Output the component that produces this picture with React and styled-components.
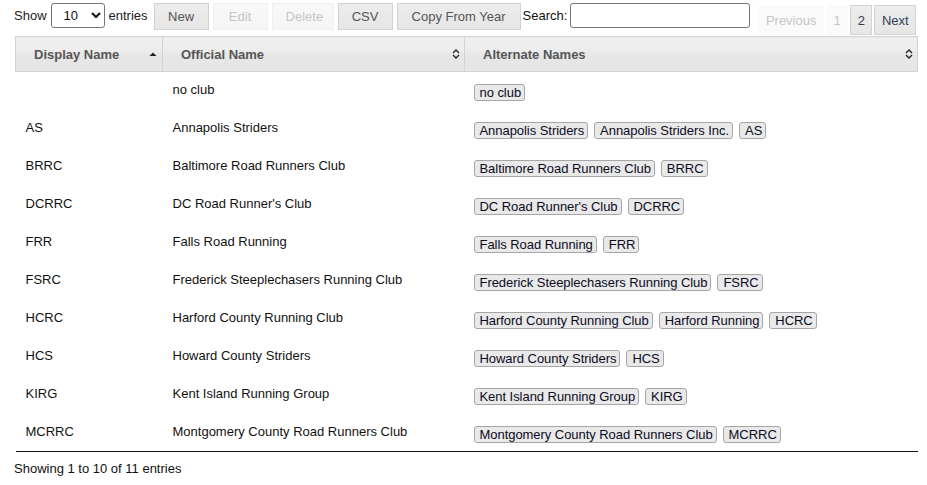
import React from "react";
import styled, { createGlobalStyle } from "styled-components";

const GlobalStyle = createGlobalStyle`
  body {
    margin: 0;
    background: #fff;
    font-family: "Liberation Sans", Arial, sans-serif;
    font-size: 13px;
    color: #222;
  }
`;

const clubs = [
  { display: "", official: "no club", alt: ["no club"] },
  { display: "AS", official: "Annapolis Striders", alt: ["Annapolis Striders", "Annapolis Striders Inc.", "AS"] },
  { display: "BRRC", official: "Baltimore Road Runners Club", alt: ["Baltimore Road Runners Club", "BRRC"] },
  { display: "DCRRC", official: "DC Road Runner's Club", alt: ["DC Road Runner's Club", "DCRRC"] },
  { display: "FRR", official: "Falls Road Running", alt: ["Falls Road Running", "FRR"] },
  { display: "FSRC", official: "Frederick Steeplechasers Running Club", alt: ["Frederick Steeplechasers Running Club", "FSRC"] },
  { display: "HCRC", official: "Harford County Running Club", alt: ["Harford County Running Club", "Harford Running", "HCRC"] },
  { display: "HCS", official: "Howard County Striders", alt: ["Howard County Striders", "HCS"] },
  { display: "KIRG", official: "Kent Island Running Group", alt: ["Kent Island Running Group", "KIRG"] },
  { display: "MCRRC", official: "Montgomery County Road Runners Club", alt: ["Montgomery County Road Runners Club", "MCRRC"] },
];

const Page = styled.div`
  padding: 3px 9px 0 15px;
`;

const Toolbar = styled.div`
  display: flex;
  align-items: flex-start;
  height: 33px;
  margin-left: -1px;
`;

const Label = styled.label`
  display: flex;
  align-items: center;
  height: 25px;
  gap: 4px;
  color: #222;
`;

const Select = styled.select`
  width: 54px;
  height: 25px;
  border: 1px solid #767676;
  border-radius: 3px;
  background: #fff;
  font-family: "Liberation Sans", Arial, sans-serif;
  font-size: 13px;
  padding: 0 4px 0 8px;
  color: #111;
`;

const Buttons = styled.div`
  display: flex;
  gap: 4px;
  margin-left: 6px;
`;

const UiButton = styled.button`
  height: 27px;
  padding: 0 1em;
  font-family: "Liberation Sans", Arial, sans-serif;
  font-size: 13px;
  color: #555;
  border: 1px solid #d3d3d3;
  border-radius: 0;
  background: linear-gradient(#ededed 0%, #e9e9e9 50%, #e6e6e6 100%);
  opacity: ${(p) => (p.disabled ? 0.35 : 1)};
  width: ${(p) => p.$w}px;
`;

const SearchBox = styled.label`
  display: flex;
  align-items: center;
  height: 25px;
  gap: 3px;
  margin-left: 2px;
  color: #111;
`;

const Input = styled.input`
  width: 180px;
  height: 25px;
  box-sizing: border-box;
  border: 1px solid #767676;
  border-radius: 3px;
  padding: 1px 4px;
`;

const Pager = styled.div`
  display: flex;
  gap: 2px;
  margin-left: 8px;
  margin-top: 2px;
`;

const PageButton = styled.span`
  display: block;
  box-sizing: border-box;
  height: 30px;
  line-height: 15px;
  padding: 0.5em;
  border: 1px solid ${(p) => (p.$off ? "#f2f2f2" : "#d3d3d3")};
  color: ${(p) => (p.$off ? "#c6c6c6" : "#2e3e52")};
  background: ${(p) =>
    p.$off ? "#f7f7f7" : "linear-gradient(#ededed 0%, #e9e9e9 50%, #e6e6e6 100%)"};
  ${(p) => p.$bare && "border-color: transparent; background: #fafafa; border-radius: 2px;"}
`;

const Table = styled.table`
  width: 903px;
  border-collapse: collapse;
  border-bottom: 1px solid #111;
`;

const Th = styled.th`
  position: relative;
  height: 35px;
  box-sizing: border-box;
  padding: 0 18px 0 18px;
  text-align: left;
  font-weight: bold;
  color: #555;
  border: 1px solid #d3d3d3;
  background: linear-gradient(#efefef 0%, #ececec 40%, #e6e6e6 55%, #e6e6e6 100%);
  width: ${(p) => p.$w}px;
`;

const SortIcon = styled.span`
  position: absolute;
  right: ${(p) => p.$right}px;
  top: 50%;
  margin-top: -6px;
  display: flex;
`;

const Td = styled.td`
  height: 38px;
  box-sizing: border-box;
  padding: 10px 10px 0;
  vertical-align: top;
  line-height: 15px;
  color: #111;
`;

const Tags = styled.div`
  display: flex;
  flex-wrap: wrap;
  gap: 6px;
  margin-top: 2px;
  margin-left: -1px;
`;

const Tag = styled.span`
  display: inline-block;
  box-sizing: border-box;
  height: 17px;
  line-height: 15px;
  padding: 0 3px 0 5px;
  border: 1px solid #a6a6a6;
  border-radius: 3px;
  background: #e9e9e9;
  color: #0b0b1e;
  white-space: nowrap;
  letter-spacing: -0.05px;
`;

const Info = styled.div`
  padding-top: 9px;
  margin-left: -1px;
  color: #111;
`;

const SortBoth = () => (
  <svg width="10" height="12" viewBox="0 0 10 12">
    <path d="M2 5 L5 2 L8 5" fill="none" stroke="#222" strokeWidth="1.4" />
    <path d="M2 7 L5 10 L8 7" fill="none" stroke="#222" strokeWidth="1.4" />
  </svg>
);

const SortAsc = () => (
  <svg width="10" height="12" viewBox="0 0 10 12">
    <path d="M1.5 8 L5 4.5 L8.5 8 Z" fill="#222" />
  </svg>
);

export default function App() {
  return (
    <Page>
      <GlobalStyle />
      <Toolbar>
        <Label>
          Show
          <Select defaultValue="10">
            <option>10</option>
            <option>25</option>
            <option>50</option>
          </Select>
          entries
        </Label>
        <Buttons>
          <UiButton $w={55}>New</UiButton>
          <UiButton $w={55} disabled>Edit</UiButton>
          <UiButton $w={62} disabled>Delete</UiButton>
          <UiButton $w={55}>CSV</UiButton>
          <UiButton $w={124}>Copy From Year</UiButton>
        </Buttons>
        <SearchBox>
          Search:
          <Input type="search" />
        </SearchBox>
        <Pager>
          <PageButton $off $bare>Previous</PageButton>
          <PageButton $off $bare>1</PageButton>
          <PageButton>2</PageButton>
          <PageButton>Next</PageButton>
        </Pager>
      </Toolbar>
      <Table>
        <thead>
          <tr>
            <Th $w={147}>
              Display Name
              <SortIcon $right={4}><SortAsc /></SortIcon>
            </Th>
            <Th $w={302}>
              Official Name
              <SortIcon $right={3}><SortBoth /></SortIcon>
            </Th>
            <Th>
              Alternate Names
              <SortIcon $right={3}><SortBoth /></SortIcon>
            </Th>
          </tr>
        </thead>
        <tbody>
          {clubs.map((c) => (
            <tr key={c.official}>
              <Td>{c.display}</Td>
              <Td>{c.official}</Td>
              <Td>
                <Tags>
                  {c.alt.map((a) => (
                    <Tag key={a}>{a}</Tag>
                  ))}
                </Tags>
              </Td>
            </tr>
          ))}
        </tbody>
      </Table>
      <Info>Showing 1 to 10 of 11 entries</Info>
    </Page>
  );
}
